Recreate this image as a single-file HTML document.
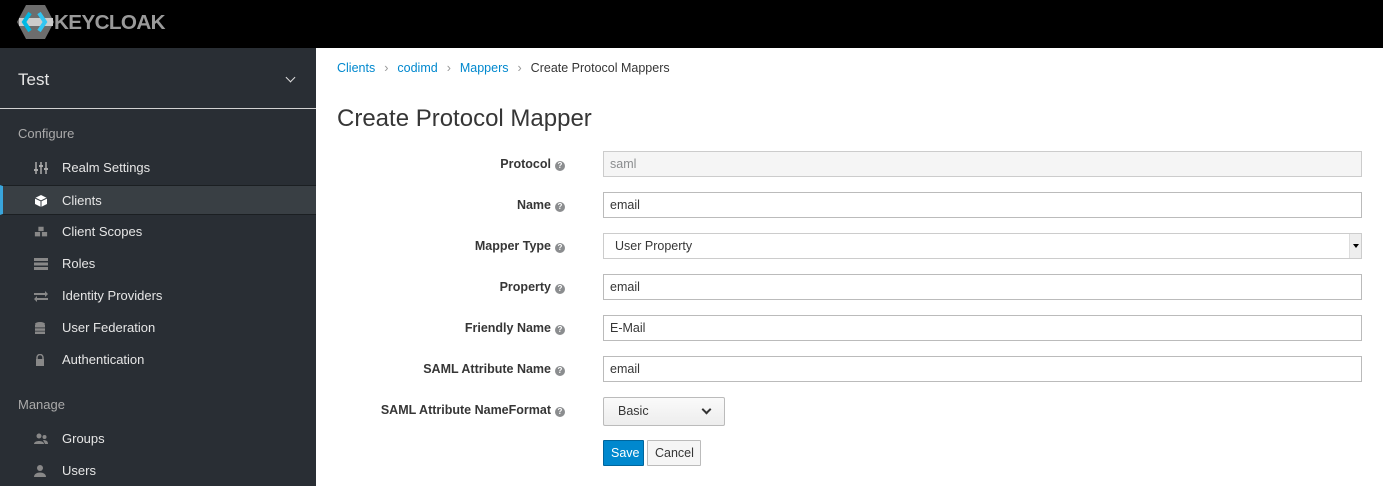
<!DOCTYPE html>
<html><head><style>
*{box-sizing:border-box;margin:0;padding:0}
body{width:1383px;height:486px;overflow:hidden;font-family:"Liberation Sans","DejaVu Sans",sans-serif;font-size:13px;color:#363636;background:#fff;position:relative}
.top{position:absolute;left:0;top:0;width:1383px;height:48px;background:#000}
.side{position:absolute;left:0;top:48px;width:316px;height:438px;background:#292e34;color:#d1d1d1}
.realm{height:61px;border-bottom:1px solid #d1d1d1;font-size:17px;color:#e6e6e6;padding:22px 18px;position:relative}
.realm .chev{position:absolute;right:22px;top:26px;width:7px;height:7px;border-right:1.5px solid #ddd;border-bottom:1.5px solid #ddd;transform:rotate(45deg)}
.sec{position:absolute;left:18px;font-size:13px;color:#aaa}
.item{position:absolute;left:0;width:316px;height:30px;line-height:30px;padding-left:62px;font-size:13px;color:#e6e6e6}
.item.act{background:#393f44;border-left:3px solid #39a5dc;padding-left:59px;border-top:1px solid #1b1f22;border-bottom:1px solid #1b1f22}
.ic{position:absolute;left:34px;top:9px;width:14px;height:12px}
.main{position:absolute;left:316px;top:48px;right:0;bottom:0}
.bc{position:absolute;left:21px;top:12px;font-size:12.5px;color:#363636}
.bc a{color:#0088ce;text-decoration:none}
.bc span.s{color:#999;margin:0 9px}
h1{position:absolute;left:21px;top:57px;font-size:24px;font-weight:normal;color:#363636}
.lbl{position:absolute;right:818px;font-weight:bold;font-size:12.5px;text-align:right;white-space:nowrap}
.q{display:inline-block;width:10px;height:10px;border-radius:50%;background:#8b8d8f;color:#fff;font-size:8px;line-height:10px;text-align:center;margin-left:4px;vertical-align:0}
.inp{position:absolute;left:287px;width:759px;height:26px;border:1px solid #bbb;padding:5px 6px;font-size:12.5px}
.btn{position:absolute;height:26px;font-size:12.5px;line-height:24px;padding:0 7px;border:1px solid #bbb;border-radius:1px}
</style></head><body>
<div class="top">
<svg width="170" height="40" style="position:absolute;left:17px;top:4px" viewBox="0 0 170 40">
<polygon points="9,1 28,1 37,18 28,35 9,35 0,18" fill="#6d6d6d"/>
<polygon points="2,14 36,14 36,22 2,22" fill="#ccc"/>
<polyline points="13,9 7,18 13,27" fill="none" stroke="#00b9e4" stroke-width="4"/>
<polyline points="22,9 28,18 22,27" fill="none" stroke="#33c6f2" stroke-width="4"/>
<text x="37" y="25" font-family="Liberation Sans" font-weight="bold" font-size="20" letter-spacing="-0.6" fill="#9a9a9a" textLength="111" lengthAdjust="spacingAndGlyphs">KEYCLOAK</text>
</svg>
</div>
<div class="side">
<div class="realm">Test<span class="chev"></span></div>
<div class="sec" style="top:78px">Configure</div>
<div class="item" style="top:105px"><svg class="ic" viewBox="0 0 14 12"><g stroke="#aaa" stroke-width="1.5"><path d="M2 0v12M7 0v12M12 0v12"/></g><g fill="#aaa"><rect x="0" y="7" width="4" height="2"/><rect x="5" y="3" width="4" height="2"/><rect x="10" y="6" width="4" height="2"/></g></svg>Realm Settings</div>
<div class="item act" style="top:137px"><svg class="ic" viewBox="0 0 14 12" style="left:31px"><path d="M7 0L13 3V9L7 12L1 9V3Z" fill="#fff"/><path d="M1 3L7 6L13 3M7 6V12" stroke="#393f44" stroke-width="1" fill="none"/></svg>Clients</div>
<div class="item" style="top:169px"><svg class="ic" viewBox="0 0 16 12"><g fill="#888"><rect x="5" y="0" width="6" height="5"/><rect x="1" y="6" width="6" height="5"/><rect x="9" y="6" width="6" height="5"/></g></svg>Client Scopes</div>
<div class="item" style="top:201px"><svg class="ic" viewBox="0 0 14 12"><g fill="#888"><rect y="0" width="14" height="3"/><rect y="4.5" width="14" height="3"/><rect y="9" width="14" height="3"/></g></svg>Roles</div>
<div class="item" style="top:233px"><svg class="ic" viewBox="0 0 14 12"><g fill="#888"><path d="M0 3h11V1l3 3-3 3V5H0z"/><path d="M14 8H3V6L0 9l3 3v-2h11z"/></g></svg>Identity Providers</div>
<div class="item" style="top:265px"><svg class="ic" viewBox="0 0 14 12"><g fill="#888"><ellipse cx="6" cy="2" rx="5" ry="2"/><rect x="1" y="3" width="10" height="2.5"/><rect x="1" y="6.3" width="10" height="2.5"/><rect x="1" y="9.5" width="10" height="2.5"/></g></svg>User Federation</div>
<div class="item" style="top:297px"><svg class="ic" viewBox="0 0 14 12"><path d="M3 5V3.5a3 3 0 0 1 6 0V5" stroke="#888" stroke-width="1.5" fill="none"/><rect x="2" y="5" width="8" height="7" fill="#888"/></svg>Authentication</div>
<div class="sec" style="top:349px">Manage</div>
<div class="item" style="top:376px"><svg class="ic" viewBox="0 0 14 12"><g fill="#888"><circle cx="5" cy="3" r="2.5"/><path d="M0 11c0-4 10-4 10 0z"/><circle cx="10.5" cy="4" r="2"/><path d="M9 7c3 0 5 1 5 4h-3z"/></g></svg>Groups</div>
<div class="item" style="top:408px"><svg class="ic" viewBox="0 0 14 12"><g fill="#888"><circle cx="6" cy="3" r="3"/><path d="M0 12c0-6 12-6 12 0z"/></g></svg>Users</div>
</div>
<div class="main">
<div class="bc" style="top:13px"><a>Clients</a><span class="s">›</span><a>codimd</a><span class="s">›</span><a>Mappers</a><span class="s">›</span>Create Protocol Mappers</div>
<h1>Create Protocol Mapper</h1>
<div class="lbl" style="top:109px">Protocol<span class="q">?</span></div>
<div class="inp" style="top:103px;background:#f5f5f5;color:#8b8d8f;border-color:#ccc">saml</div>
<div class="lbl" style="top:150px">Name<span class="q">?</span></div>
<div class="inp" style="top:144px">email</div>
<div class="lbl" style="top:191px">Mapper Type<span class="q">?</span></div>
<div class="inp" style="top:185px;padding-left:11px;border-color:#ccc">User Property<div style="position:absolute;right:0;top:0;width:12px;height:24px;background:#eee;border-left:1px solid #ddd"><div style="position:absolute;left:3px;top:10px;border:3px solid transparent;border-top:4px solid #000"></div></div></div>
<div class="lbl" style="top:232px">Property<span class="q">?</span></div>
<div class="inp" style="top:226px">email</div>
<div class="lbl" style="top:273px">Friendly Name<span class="q">?</span></div>
<div class="inp" style="top:267px">E-Mail</div>
<div class="lbl" style="top:314px">SAML Attribute Name<span class="q">?</span></div>
<div class="inp" style="top:308px">email</div>
<div class="lbl" style="top:355px">SAML Attribute NameFormat<span class="q">?</span></div>
<div class="btn" style="left:287px;top:349px;width:122px;height:29px;line-height:27px;padding-left:14px;background:linear-gradient(#fafafa,#ededed);border-radius:2px">Basic<span style="position:absolute;right:14px;top:8px;width:7px;height:7px;border-right:2px solid #333;border-bottom:2px solid #333;transform:rotate(45deg)"></span></div>
<div class="btn" style="left:287px;top:392px;width:41px;background:#0088ce;border-color:#00659c;color:#fff">Save</div>
<div class="btn" style="left:331px;top:392px;width:54px;background:#f5f5f5">Cancel</div>
</div>
</body></html>
